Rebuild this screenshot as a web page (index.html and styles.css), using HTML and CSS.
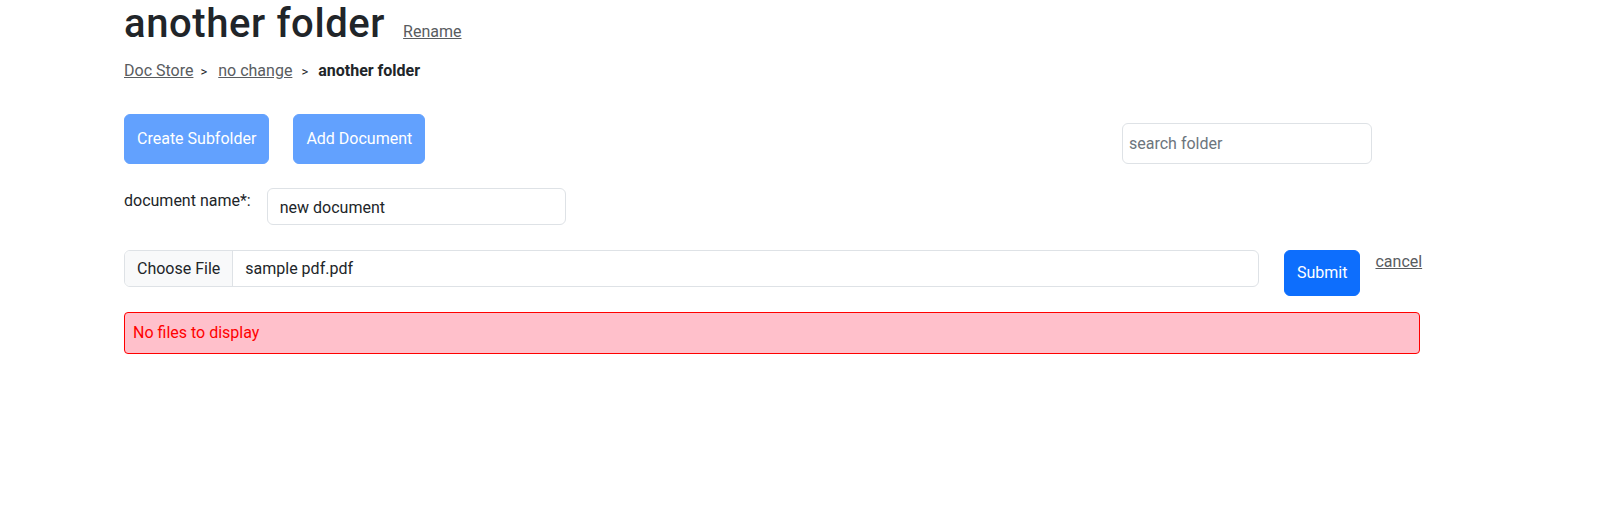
FILE: index.html
```html
<!DOCTYPE html>
<html lang="en">
<head>
<meta charset="utf-8">
<title>another folder</title>
<link rel="stylesheet" href="styles.css">
</head>
<body>
<main class="page">
  <div class="title-row">
    <h1 class="title">another folder</h1>
    <a class="link" href="#">Rename</a>
  </div>
  <nav class="crumbs">
    <a class="link" href="#">Doc Store</a><span class="sep sep-first">&gt;</span><a class="link" href="#">no change</a><span class="sep">&gt;</span><strong class="current">another folder</strong>
  </nav>
  <div class="toolbar">
    <button class="btn btn-faded btn-tall" type="button" disabled>Create Subfolder</button>
    <button class="btn btn-faded btn-tall" type="button" disabled>Add Document</button>
    <input class="input search" type="text" placeholder="search folder">
  </div>
  <div class="name-row">
    <label class="label" for="docname">document name*:</label>
    <input class="input name-input" id="docname" type="text" value="new document">
  </div>
  <div class="file-row">
    <div class="file-input">
      <span class="file-btn">Choose File</span>
      <span class="file-name">sample pdf.pdf</span>
    </div>
    <button class="btn btn-primary" type="button">Submit</button>
    <a class="link cancel" href="#">cancel</a>
  </div>
  <div class="alert">No files to display</div>
</main>
</body>
</html>
```
FILE: styles.css
```css
* { box-sizing: border-box; }

body {
  margin: 0;
  font-family: Roboto, "Liberation Sans", Arial, sans-serif;
  font-size: 16px;
  line-height: 1.5;
  color: #212529;
  background: #fff;
}

.page {
  padding: 0 192px 0 124px;
}

.title-row {
  display: flex;
  align-items: baseline;
  gap: 18px;
}

.title {
  margin: 0;
  font-size: 40px;
  line-height: 1.2;
  font-weight: 500;
  letter-spacing: 0.6px;
}

.link {
  color: #595c5f;
  text-decoration: underline;
}

.crumbs {
  margin-top: 11px;
  display: flex;
  align-items: baseline;
}

.sep {
  font-size: 13px;
  color: #212529;
  margin: 0 10px 0 9px;
}

.sep-first {
  margin: 0 11px 0 7px;
}

.current {
  font-weight: 700;
}

.toolbar {
  margin-top: 31px;
  display: flex;
  align-items: flex-end;
  gap: 24px;
}

.btn {
  font-family: inherit;
  font-size: 16px;
  line-height: 1.5;
  color: #fff;
  border: 1px solid transparent;
  border-radius: 6px;
  padding: 10px 12px;
  cursor: pointer;
  flex-shrink: 0;
}

.btn-tall {
  padding: 12px 12px;
}

.btn-faded {
  background: #62a1fe;
  border-color: #62a1fe;
  cursor: default;
}

.btn-primary {
  background: #0d6efd;
  border-color: #0d6efd;
}

.input {
  font-family: inherit;
  font-size: 16px;
  line-height: 1.5;
  color: #212529;
  background: #fff;
  border: 1px solid #dee2e6;
  border-radius: 6px;
  padding: 6px 12px;
  outline: none;
}

.input::placeholder {
  color: #6c757d;
}

.search {
  width: 250px;
  height: 41px;
  padding: 7px 6px;
  margin-left: auto;
  margin-right: 48px;
}

.name-row {
  margin-top: 24px;
  display: flex;
  align-items: flex-start;
  gap: 16px;
}

.label {
  line-height: 24px;
  padding-top: 1px;
}

.name-input {
  width: 299px;
  height: 37px;
  padding-top: 7px;
  padding-bottom: 5px;
}

.file-row {
  margin-top: 25px;
  display: flex;
  align-items: flex-start;
}

.file-input {
  flex: 0 0 1135px;
  height: 37px;
  display: flex;
  border: 1px solid #dee2e6;
  border-radius: 6px;
  overflow: hidden;
  margin-right: 25px;
}

.file-btn {
  background: #f8f9fa;
  border-right: 1px solid #dee2e6;
  padding: 6px 12px 4px;
}

.file-name {
  padding: 6px 12px 4px;
}

.cancel {
  margin-left: 15px;
  flex-shrink: 0;
}

.alert {
  margin-top: 16px;
  background: #ffc0cb;
  border: 1px solid #ff0000;
  border-radius: 4px;
  color: #ff0000;
  padding: 8px 8px;
}
```
